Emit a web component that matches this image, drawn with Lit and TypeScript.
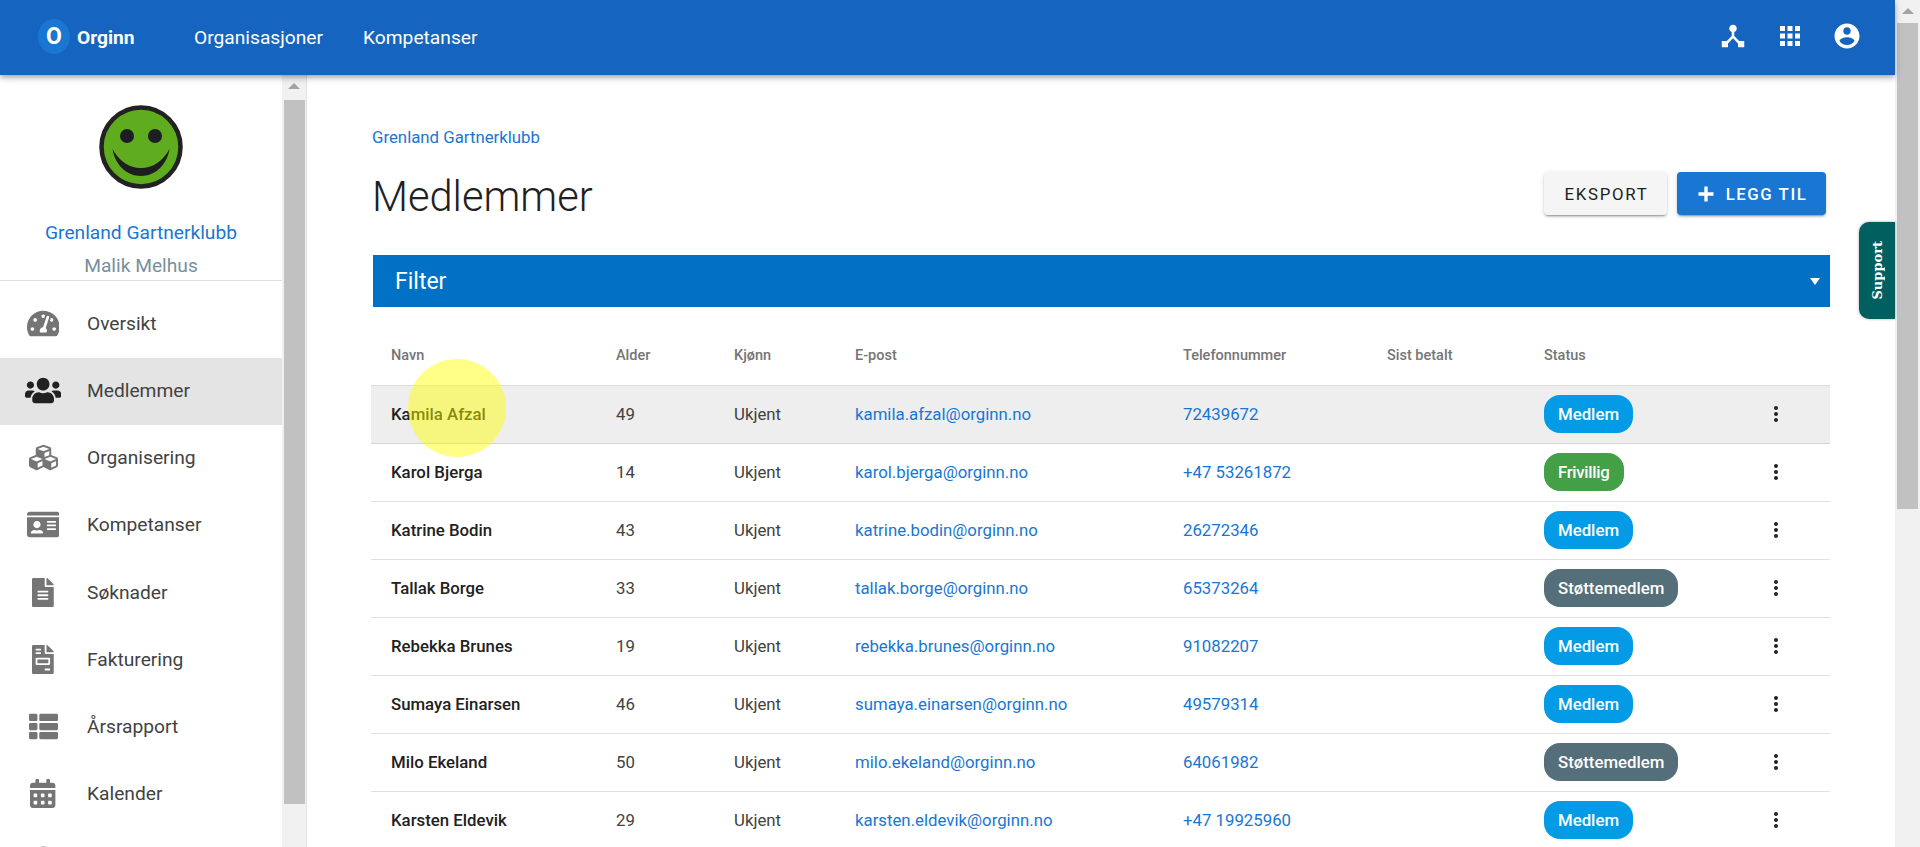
import { LitElement, html, css, svg } from "lit";
import { customElement } from "lit/decorators.js";

type Ico = { vb: string; d: string };
const fa: Record<string, Ico> = {
  gauge: { vb: "0 0 576 512", d: "M288 32C128.94 32 0 160.94 0 320c0 52.8 14.25 102.26 39.06 144.8 5.61 9.62 16.3 15.2 27.44 15.2h443c11.14 0 21.83-5.58 27.44-15.2C561.75 422.26 576 372.8 576 320c0-159.06-128.94-288-288-288zm0 64c14.71 0 26.58 10.13 30.32 23.65-1.11 2.26-2.64 4.23-3.45 6.67l-9.22 27.67c-5.13 3.49-10.97 6.01-17.64 6.01-17.67 0-32-14.33-32-32S270.33 96 288 96zM96 384c-17.67 0-32-14.33-32-32s14.33-32 32-32 32 14.33 32 32-14.33 32-32 32zm48-160c-17.67 0-32-14.33-32-32s14.33-32 32-32 32 14.33 32 32-14.33 32-32 32zm246.77-72.41l-61.33 184C343.13 347.33 352 364.54 352 384c0 11.72-3.38 22.55-8.88 32H232.88c-5.5-9.45-8.88-20.28-8.88-32 0-33.94 26.5-61.43 59.9-63.59l61.34-184.01c4.17-12.56 17.73-19.45 30.36-15.17 12.57 4.19 19.35 17.79 15.17 30.36zm14.66 57.2l15.52-46.55c3.47-1.29 7.13-2.23 11.05-2.23 17.67 0 32 14.33 32 32s-14.33 32-32 32c-11.38-.01-20.89-6.28-26.57-15.22zM480 384c-17.67 0-32-14.33-32-32s14.33-32 32-32 32 14.33 32 32-14.33 32-32 32z" },
  users: { vb: "0 0 640 512", d: "M96 224c35.3 0 64-28.7 64-64s-28.7-64-64-64-64 28.7-64 64 28.7 64 64 64zm448 0c35.3 0 64-28.7 64-64s-28.7-64-64-64-64 28.7-64 64 28.7 64 64 64zm32 32h-64c-17.6 0-33.5 7.1-45.1 18.6 40.3 22.1 68.9 62 75.1 109.4h66c17.7 0 32-14.3 32-32v-32c0-35.3-28.7-64-64-64zm-256 0c61.9 0 112-50.1 112-112S381.9 32 320 32 208 82.1 208 144s50.1 112 112 112zm76.8 32h-8.3c-20.8 10-43.9 16-68.5 16s-47.6-6-68.5-16h-8.3C179.6 288 128 339.6 128 403.2V432c0 26.5 21.5 48 48 48h288c26.5 0 48-21.5 48-48v-28.8c0-63.6-51.6-115.2-115.2-115.2zm-223.7-13.4C161.5 263.1 145.6 256 128 256H64c-35.3 0-64 28.7-64 64v32c0 17.7 14.3 32 32 32h65.9c6.3-47.4 34.9-87.3 75.2-109.4z" },
  cubes: { vb: "0 0 512 512", d: "M488.6 250.2L392 214V105.5c0-15-9.3-28.4-23.4-33.7l-100-37.5c-8.1-3.1-17.1-3.1-25.3 0l-100 37.5c-14.1 5.3-23.4 18.7-23.4 33.7V214l-96.6 36.2C9.3 255.5 0 268.9 0 283.9V394c0 13.6 7.7 26.1 19.9 32.2l100 50c10.1 5.1 22.1 5.1 32.2 0l103.9-52 103.9 52c10.1 5.1 22.1 5.1 32.2 0l100-50c12.2-6.1 19.9-18.6 19.9-32.2V283.9c0-15-9.3-28.4-23.4-33.7zM358 214.8l-85 31.9v-68.2l85-37v73.3zM154 104.1l102-38.2 102 38.2v.6l-102 41.4-102-41.4v-.6zm84 291.1l-85 42.5v-79.1l85-38.8v75.4zm0-112l-102 41.4-102-41.4v-.6l102-38.2 102 38.2v.6zm240 112l-85 42.5v-79.1l85-38.8v75.4zm0-112l-102 41.4-102-41.4v-.6l102-38.2 102 38.2v.6z" },
  idcard: { vb: "0 0 576 512", d: "M528 32H48C21.5 32 0 53.5 0 80v16h576V80c0-26.5-21.5-48-48-48zM0 432c0 26.5 21.5 48 48 48h480c26.5 0 48-21.5 48-48V128H0v304zm352-232c0-4.4 3.6-8 8-8h144c4.4 0 8 3.6 8 8v16c0 4.4-3.6 8-8 8H360c-4.4 0-8-3.6-8-8v-16zm0 64c0-4.4 3.6-8 8-8h144c4.4 0 8 3.6 8 8v16c0 4.4-3.6 8-8 8H360c-4.4 0-8-3.6-8-8v-16zm0 64c0-4.4 3.6-8 8-8h144c4.4 0 8 3.6 8 8v16c0 4.4-3.6 8-8 8H360c-4.4 0-8-3.6-8-8v-16zM176 192c35.3 0 64 28.7 64 64s-28.7 64-64 64-64-28.7-64-64 28.7-64 64-64zM67.1 396.2C75.5 370.5 99.6 352 128 352h8.2c12.3 5.1 25.7 8 39.8 8s27.6-2.9 39.8-8h8.2c28.4 0 52.5 18.5 60.9 44.2 3.2 9.9-5.2 19.8-15.6 19.8H82.7c-10.4 0-18.8-10-15.6-19.8z" },
  file: { vb: "0 0 384 512", d: "M224 136V0H24C10.7 0 0 10.7 0 24v464c0 13.3 10.7 24 24 24h336c13.3 0 24-10.7 24-24V160H248c-13.2 0-24-10.8-24-24zm64 236c0 6.6-5.4 12-12 12H108c-6.6 0-12-5.4-12-12v-8c0-6.6 5.4-12 12-12h168c6.6 0 12 5.4 12 12v8zm0-64c0 6.6-5.4 12-12 12H108c-6.6 0-12-5.4-12-12v-8c0-6.6 5.4-12 12-12h168c6.6 0 12 5.4 12 12v8zm0-72v8c0 6.6-5.4 12-12 12H108c-6.6 0-12-5.4-12-12v-8c0-6.6 5.4-12 12-12h168c6.6 0 12 5.4 12 12zm96-114.1v6.1H256V0h6.1c6.4 0 12.5 2.5 17 7l97.9 98c4.5 4.5 7 10.6 7 16.9z" },
  invoice: { vb: "0 0 384 512", d: "M288 256H96v64h192v-64zm89-151L279.1 7c-4.5-4.5-10.6-7-17-7H256v128h128v-6.1c0-6.3-2.5-12.4-7-16.9zm-153 31V0H24C10.7 0 0 10.7 0 24v464c0 13.3 10.7 24 24 24h336c13.3 0 24-10.7 24-24V160H248c-13.2 0-24-10.8-24-24zM64 72c0-4.42 3.58-8 8-8h80c4.42 0 8 3.58 8 8v16c0 4.42-3.58 8-8 8H72c-4.42 0-8-3.58-8-8V72zm0 64c0-4.42 3.58-8 8-8h80c4.42 0 8 3.58 8 8v16c0 4.42-3.58 8-8 8H72c-4.42 0-8-3.58-8-8v-16zm256 304c0 4.42-3.58 8-8 8h-80c-4.42 0-8-3.58-8-8v-16c0-4.42 3.58-8 8-8h80c4.42 0 8 3.58 8 8v16zm0-200v96c0 8.84-7.16 16-16 16H80c-8.84 0-16-7.16-16-16v-96c0-8.84 7.16-16 16-16h224c8.84 0 16 7.16 16 16z" },
  list: { vb: "0 0 512 512", d: "M149.333 216v80c0 13.255-10.745 24-24 24H24c-13.255 0-24-10.745-24-24v-80c0-13.255 10.745-24 24-24h101.333c13.255 0 24 10.745 24 24zM0 376v80c0 13.255 10.745 24 24 24h101.333c13.255 0 24-10.745 24-24v-80c0-13.255-10.745-24-24-24H24c-13.255 0-24 10.745-24 24zM125.333 32H24C10.745 32 0 42.745 0 56v80c0 13.255 10.745 24 24 24h101.333c13.255 0 24-10.745 24-24V56c0-13.255-10.745-24-24-24zm80 448H488c13.255 0 24-10.745 24-24v-80c0-13.255-10.745-24-24-24H205.333c-13.255 0-24 10.745-24 24v80c0 13.255 10.745 24 24 24zm-24-424v80c0 13.255 10.745 24 24 24H488c13.255 0 24-10.745 24-24V56c0-13.255-10.745-24-24-24H205.333c-13.255 0-24 10.745-24 24zm24 264H488c13.255 0 24-10.745 24-24v-80c0-13.255-10.745-24-24-24H205.333c-13.255 0-24 10.745-24 24v80c0 13.255 10.745 24 24 24z" },
  cal: { vb: "0 0 448 512", d: "M0 464c0 26.5 21.5 48 48 48h352c26.5 0 48-21.5 48-48V192H0v272zm320-196c0-6.6 5.4-12 12-12h40c6.6 0 12 5.4 12 12v40c0 6.6-5.4 12-12 12h-40c-6.6 0-12-5.4-12-12v-40zm0 128c0-6.6 5.4-12 12-12h40c6.6 0 12 5.4 12 12v40c0 6.6-5.4 12-12 12h-40c-6.6 0-12-5.4-12-12v-40zM192 268c0-6.6 5.4-12 12-12h40c6.6 0 12 5.4 12 12v40c0 6.6-5.4 12-12 12h-40c-6.6 0-12-5.4-12-12v-40zm0 128c0-6.6 5.4-12 12-12h40c6.6 0 12 5.4 12 12v40c0 6.6-5.4 12-12 12h-40c-6.6 0-12-5.4-12-12v-40zM64 268c0-6.6 5.4-12 12-12h40c6.6 0 12 5.4 12 12v40c0 6.6-5.4 12-12 12H76c-6.6 0-12-5.4-12-12v-40zm0 128c0-6.6 5.4-12 12-12h40c6.6 0 12 5.4 12 12v40c0 6.6-5.4 12-12 12H76c-6.6 0-12-5.4-12-12v-40zM400 64h-48V16c0-8.8-7.2-16-16-16h-32c-8.8 0-16 7.2-16 16v48H160V16c0-8.8-7.2-16-16-16h-32c-8.8 0-16 7.2-16 16v48H48C21.5 64 0 85.5 0 112v48h448v-48c0-26.5-21.5-48-48-48z" },
  circle: { vb: "0 0 512 512", d: "M256 8C119 8 8 119 8 256s111 248 248 248 248-111 248-248S393 8 256 8z" },
};

const menu: { icon: string; label: string; active?: boolean }[] = [
  { icon: "gauge", label: "Oversikt" },
  { icon: "users", label: "Medlemmer", active: true },
  { icon: "cubes", label: "Organisering" },
  { icon: "idcard", label: "Kompetanser" },
  { icon: "file", label: "Søknader" },
  { icon: "invoice", label: "Fakturering" },
  { icon: "list", label: "Årsrapport" },
  { icon: "cal", label: "Kalender" },
  { icon: "circle", label: "" },
];

const members = [
  ["Kamila Afzal", "49", "kamila.afzal@orginn.no", "72439672", "Medlem"],
  ["Karol Bjerga", "14", "karol.bjerga@orginn.no", "+47 53261872", "Frivillig"],
  ["Katrine Bodin", "43", "katrine.bodin@orginn.no", "26272346", "Medlem"],
  ["Tallak Borge", "33", "tallak.borge@orginn.no", "65373264", "Støttemedlem"],
  ["Rebekka Brunes", "19", "rebekka.brunes@orginn.no", "91082207", "Medlem"],
  ["Sumaya Einarsen", "46", "sumaya.einarsen@orginn.no", "49579314", "Medlem"],
  ["Milo Ekeland", "50", "milo.ekeland@orginn.no", "64061982", "Støttemedlem"],
  ["Karsten Eldevik", "29", "karsten.eldevik@orginn.no", "+47 19925960", "Medlem"],
];

const chipClass: Record<string, string> = { Medlem: "c-m", Frivillig: "c-f", "Støttemedlem": "c-s" };

const matIcon = (d: string, cls: string) =>
  html`<svg class=${cls} viewBox="0 0 24 24" fill="currentColor"><path d=${d}></path></svg>`;

@customElement("app-root")
export class AppRoot extends LitElement {
  static styles = css`
    :host {
      display: flex;
      width: 1920px;
      height: 847px;
      overflow: hidden;
      font-family: Roboto, "Noto Sans", sans-serif;
      color: #212121;
      background: #fff;
      position: relative;
    }
    a { text-decoration: none; color: #1976d2; }
    .page { width: 1895px; flex: none; display: flex; flex-direction: column; height: 847px; position: relative; }
    .toolbar {
      height: 75px; flex: none; background: #1565c0; color: #fff; display: flex; align-items: center;
      padding: 0 0 0 38px; box-shadow: 0 2px 4px -1px rgba(0,0,0,.2), 0 4px 5px 0 rgba(0,0,0,.14), 0 1px 10px 0 rgba(0,0,0,.12);
      position: relative; z-index: 2; box-sizing: border-box;
    }
    .logo { width: 32px; height: 35px; margin-bottom: 2px; border-radius: 50%; background: #1976d2; display: flex; align-items: center; justify-content: center; font-size: 23px; font-weight: 700; flex: none; }
    .brand { font-size: 19.2px; font-weight: 700; margin-left: 7px; width: 59px; }
    .nav { font-size: 19.2px; font-weight: 400; margin-left: 58px; }
    .nav + .nav { margin-left: 40px; }
    .tb-right { margin-left: auto; display: flex; align-items: center; gap: 27px; padding: 0 33px 3px 0; }
    .tb-ic { width: 30px; height: 30px; display: block; }
    .body { flex: 1; min-height: 0; display: flex; }
    .side { width: 282px; flex: none; overflow: hidden; }
    .side-head { height: 205px; border-bottom: 1px solid #e0e0e0; display: flex; flex-direction: column; align-items: center; box-sizing: content-box; }
    .smile { width: 84px; height: 84px; margin-top: 30px; display: block; }
    .club { font-size: 19.2px; color: #1976d2; margin-top: 32px; line-height: 24px; }
    .user { font-size: 19.2px; color: #78909c; margin-top: 9px; line-height: 24px; }
    .list { padding-top: 10px; }
    .item { height: 67.15px; box-sizing: border-box; padding-bottom: 2px; display: flex; align-items: center; font-size: 19.2px; color: #424242; }
    .item.active { background: #e4e4e4; }
    .ic { flex: none; display: block; }
    .ic svg { height: 29px; display: block; fill: #757575; }
    .item.active .ic svg { fill: #212121; }
    .ic-wrap { width: 87px; flex: none; display: flex; justify-content: center; padding-right: 1px; box-sizing: border-box; }
    .sb { flex: none; background: #f1f1f1; display: flex; flex-direction: column; align-items: center; }
    .sb-side { width: 24px; border-right: 1px solid #e0e0e0; }
    .sb-page { width: 25px; height: 847px; }
    .arrow { width: 0; height: 0; border-left: 6px solid transparent; border-right: 6px solid transparent; border-bottom: 6px solid #a3a3a3; margin-top: 8px; }
    .thumb { background: #c1c1c1; width: 21px; }
    .side-thumb { height: 704px; margin-top: 11px; }
    .page-thumb { height: 486px; margin-top: 9px; }
    .main { flex: 1; min-width: 0; padding: 50px 65px 0 64px; box-sizing: border-box; overflow: hidden; }
    .crumb { font-size: 16.8px; line-height: 24px; padding-left: 1px; display: block; }
    .head { display: flex; align-items: center; justify-content: space-between; height: 43px; margin-top: 23px; padding: 0 4px 0 1px; }
    h1 { margin: 6px 0 0; font-weight: 300; font-size: 41.6px; line-height: 43px; color: #212121; }
    .btns { display: flex; gap: 10px; }
    .btn { height: 43px; border-radius: 4px; font-size: 16.8px; font-weight: 500; letter-spacing: 1.75px; display: flex; align-items: center; justify-content: center; box-sizing: border-box; box-shadow: 0 3px 1px -2px rgba(0,0,0,.2), 0 2px 2px 0 rgba(0,0,0,.14), 0 1px 5px 0 rgba(0,0,0,.12); }
    .btn-l { width: 123px; background: #f5f5f5; color: #212121; font-weight: 400; padding-left: 2px; }
    .btn-p { width: 149px; background: #1976d2; color: #fff; gap: 10px; letter-spacing: 1.55px; }
    .plus { width: 20px; height: 20px; fill: #fff; display: block; }
    .filter { height: 52px; margin: 40px 0 0 2px; background: #0071c5; color: #fff; display: flex; align-items: center; justify-content: space-between; padding: 0 10px 0 22px; font-size: 23px; }
    .caret { width: 0; height: 0; border-left: 5px solid transparent; border-right: 5px solid transparent; border-top: 7px solid #fff; }
    .grid { display: grid; grid-template-columns: 225px 118px 121px 328px 204px 157px 1fr 66px; padding-left: 20px; align-items: center; }
    .thead { height: 78px; box-sizing: border-box; padding-top: 19px; font-size: 14.5px; font-weight: 500; color: #757575; }
    .row { height: 58px; box-sizing: border-box; border-top: 1px solid #e0e0e0; padding-bottom: 1px; font-size: 16.8px; color: #424242; }
    .row.hover { background: #eee; border-top-color: #ddd; }
    .row.hover + .row { border-top-color: #d4d4d4; }
    .name { font-weight: 500; color: #212121; }
    .chip { display: inline-flex; align-items: center; height: 38px; padding: 0 14px; border-radius: 16px; color: #fff; font-size: 16.8px; font-weight: 500; vertical-align: top; }
    .chip-cell { height: 38px; }
    .c-m { background: #039be5; }
    .c-f { background: #43a047; letter-spacing: -.3px; }
    .c-s { background: #546e7a; }
    .kebab { width: 24px; height: 24px; display: block; fill: #212121; }
    .support {
      position: absolute; right: 0; top: 222px; width: 36px; height: 97px; background: #00605f; border-radius: 10px 0 0 10px;
      color: #fff; display: flex; align-items: center; justify-content: center; box-shadow: 0 0 3px rgba(0,0,0,.35);
      font-family: "DejaVu Serif", serif; font-weight: 700; font-size: 13px; writing-mode: vertical-rl; z-index: 3;
    }
    .support span { transform: rotate(180deg); display: block; }
    .spot { position: absolute; left: 408px; top: 359px; width: 98px; height: 98px; border-radius: 50%; background: rgba(255,255,0,.47); pointer-events: none; z-index: 4; }
  `;

  render() {
    return html`
      <div class="page">
        <header class="toolbar">
          <div class="logo">O</div>
          <div class="brand">Orginn</div>
          <div class="nav">Organisasjoner</div>
          <div class="nav">Kompetanser</div>
          <div class="tb-right">
            ${matIcon("M17 16l-4-4V8.82C14.16 8.4 15 7.3 15 6c0-1.66-1.34-3-3-3S9 4.34 9 6c0 1.3.84 2.4 2 2.82V12l-4 4H3v5h5v-3.05l4-4.2 4 4.2V21h5v-5h-4z", "tb-ic")}
            ${matIcon("M4 8h4V4H4v4zm6 12h4v-4h-4v4zm-6 0h4v-4H4v4zm0-6h4v-4H4v4zm6 0h4v-4h-4v4zm6-10v4h4V4h-4zm-6 4h4V4h-4v4zm6 6h4v-4h-4v4zm0 6h4v-4h-4v4z", "tb-ic")}
            ${matIcon("M12 2C6.48 2 2 6.48 2 12s4.48 10 10 10 10-4.48 10-10S17.52 2 12 2zm0 3c1.66 0 3 1.34 3 3s-1.34 3-3 3-3-1.34-3-3 1.34-3 3-3zm0 14.2c-2.5 0-4.71-1.28-6-3.22.03-1.99 4-3.08 6-3.08 1.99 0 5.97 1.09 6 3.08-1.29 1.94-3.5 3.22-6 3.22z", "tb-ic")}
          </div>
        </header>
        <div class="body">
          <aside class="side">
            <div class="side-head">
              <svg class="smile" viewBox="0 0 84 84">
                ${svg`<circle cx="42" cy="42" r="39.5" fill="#5fad1f" stroke="#222" stroke-width="4.5"></circle>
                <circle cx="28" cy="31" r="7" fill="#1e1e22"></circle>
                <circle cx="56" cy="31" r="7" fill="#1e1e22"></circle>
                <path d="M13.5 44C16 60 28 71 42 71C56 71 68 60 70.5 44C64 56 54 63 42 63C30 63 20 56 13.5 44z" fill="#1e1e22"></path>`}
              </svg>
              <div class="club">Grenland Gartnerklubb</div>
              <div class="user">Malik Melhus</div>
            </div>
            <nav class="list">
              ${menu.map(
                (m) => html`<div class="item ${m.active ? "active" : ""}">
                  <div class="ic-wrap"><span class="ic"><svg viewBox=${fa[m.icon].vb}><path d=${fa[m.icon].d}></path></svg></span></div>
                  ${m.label}
                </div>`
              )}
            </nav>
          </aside>
          <div class="sb sb-side"><div class="arrow"></div><div class="thumb side-thumb"></div></div>
          <main class="main">
            <a class="crumb">Grenland Gartnerklubb</a>
            <div class="head">
              <h1>Medlemmer</h1>
              <div class="btns">
                <div class="btn btn-l">EKSPORT</div>
                <div class="btn btn-p"><svg class="plus" viewBox="0 0 24 24"><path d="M21 14h-7v7h-4v-7H3v-4h7V3h4v7h7z"></path></svg>LEGG TIL</div>
              </div>
            </div>
            <div class="filter">Filter<span class="caret"></span></div>
            <div class="grid thead">
              <div>Navn</div><div>Alder</div><div>Kjønn</div><div>E-post</div><div>Telefonnummer</div><div>Sist betalt</div><div>Status</div><div></div>
            </div>
            ${members.map(
              (m, i) => html`<div class="grid row ${i === 0 ? "hover" : ""}">
                <div class="name">${m[0]}</div>
                <div>${m[1]}</div>
                <div>Ukjent</div>
                <div><a>${m[2]}</a></div>
                <div><a>${m[3]}</a></div>
                <div></div>
                <div class="chip-cell"><span class="chip ${chipClass[m[4]]}">${m[4]}</span></div>
                <div><svg class="kebab" viewBox="0 0 24 24"><path d="M12 8c1.1 0 2-.9 2-2s-.9-2-2-2-2 .9-2 2 .9 2 2 2zm0 2c-1.1 0-2 .9-2 2s.9 2 2 2 2-.9 2-2-.9-2-2-2zm0 6c-1.1 0-2 .9-2 2s.9 2 2 2 2-.9 2-2-.9-2-2-2z"></path></svg></div>
              </div>`
            )}
          </main>
        </div>
        <div class="support"><span>Support</span></div>
      </div>
      <div class="sb sb-page"><div class="arrow"></div><div class="thumb page-thumb"></div></div>
      <div class="spot"></div>
    `;
  }
}
